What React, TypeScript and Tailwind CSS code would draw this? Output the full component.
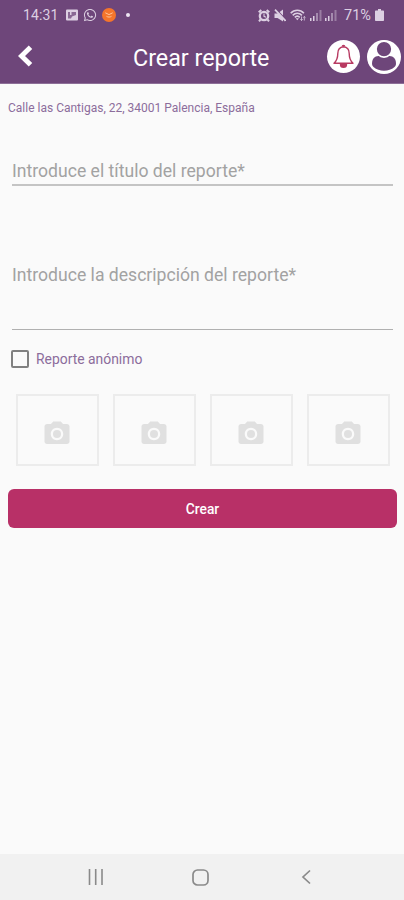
import { FaWhatsapp } from "react-icons/fa";
import { MdPhotoCamera } from "react-icons/md";

const photoSlots = [1, 2, 3, 4];

const SignalIcon = () => (
  <svg width="12" height="12" viewBox="0 0 12 12" fill="currentColor">
    <rect x="0" y="9" width="1.500" height="3" />
    <rect x="3" y="7" width="1.500" height="5" />
    <rect x="6" y="4" width="2" height="8" opacity="0.5" />
    <rect x="9.500" y="1" width="2" height="11" opacity="0.4" />
  </svg>
);

const StatusBar = () => (
  <div className="flex h-[30px] items-center justify-between pl-[23px] pr-[20px] text-[#dccfe2]">
    <div className="flex items-center">
      <span className="w-[43px] text-[14px] leading-none tracking-[0.1px]">14:31</span>
      {/* Imagen */}
      <svg width="12" height="12" viewBox="0 0 12 12">
        <rect x="0" y=".5" width="12" height="11" rx="1" fill="currentColor" />
        <path d="M2 9.500V3h2v3h1.500V3H10v3L6 7.500l-1 2Z" fill="#6e467a" opacity=".75" />
      </svg>
      <FaWhatsapp className="ml-[5px] h-[14px] w-[14px]" />
      <span className="ml-[5px] flex h-[14px] w-[14px] items-center justify-center rounded-full bg-[#f5752b]">
        <svg width="8" height="6" viewBox="0 0 8 6" fill="none" stroke="#ffc49a" strokeWidth="1">
          <path d="M.3.800 4 2.600 7.700.800M1.500 4.300c1.400 1 3.600 1 5 0" />
        </svg>
      </span>
      <span className="ml-[10px] h-1 w-1 rounded-full bg-[#eee5f2]" />
    </div>
    <div className="flex items-center">
      {/* Alarma */}
      <svg width="12" height="13" viewBox="0 0 12 13" fill="none" stroke="currentColor">
        <circle cx="6" cy="7" r="4.200" strokeWidth="2.300" />
        <path d="M6 4.500V7.300l2 1" strokeWidth="1.100" />
        <path d="M.7 3.200 3.300 1M11.300 3.200 8.700 1M2.500 10.500 1 12.300M9.500 10.500l1.500 1.800" strokeWidth="2" />
      </svg>
      {/* Silencio */}
      <svg className="ml-[4px]" width="12" height="13" viewBox="0 0 12 13">
        <path d="M.5 4.500h3L9 .5v12L3.500 9h-3Z" fill="currentColor" />
        <path d="M2.500.700 12 10.500" stroke="#6e467a" strokeWidth="1.200" />
        <path d="M1 .7 11.500 11.800" stroke="currentColor" strokeWidth="1.700" />
      </svg>
      {/* Wifi */}
      <svg className="ml-[4px] mr-[4px]" width="16" height="12" viewBox="0 0 16 12" fill="none" stroke="currentColor">
        <path d="M.7 4.200C4.300.300 10.300.300 13.900 4.200M2.700 6.400c2.600-2.800 6.600-2.800 9.200 0M4.800 8.400c1.500-1.500 3.500-1.500 5 0" strokeWidth="1.600" />
        <path d="M5.600 9.200h3.400l-1.700 2Z" fill="currentColor" stroke="none" />
        <path d="M11.500 7.500v4M10.300 10.200l1.200 1.300 1.200-1.300M14.300 11.500v-4M13.200 8.700l1.100-1.200 1.200 1.200" strokeWidth=".8" />
      </svg>
      <SignalIcon />
      <span className="w-[3px]" />
      <SignalIcon />
      <span className="ml-[7px] w-[31px] pt-px text-[14.500px] leading-[16px]">71%</span>
      <svg width="9" height="12" viewBox="0 0 9 12" fill="currentColor">
        <path d="M3 0h3v1.500h2.200c.5 0 .8.300.8.800v8.900c0 .5-.3.800-.8.800H.8c-.5 0-.8-.3-.8-.8V2.300c0-.5.300-.8.800-.8H3z" />
      </svg>
    </div>
  </div>
);

const Header = () => (
  <header className="h-[84px] border-b border-[#8d6f98] bg-[#6e467a]">
    <StatusBar />
    <div className="flex h-[53px] items-center pl-[18px] pr-[3px] text-white">
      <button className="flex w-[115px] items-center pb-[2px]">
        <svg width="15" height="22" viewBox="0 0 15 22" fill="none" stroke="currentColor" strokeWidth="5">
          <path d="M12.500 2.300 3.500 11l9 8.700" />
        </svg>
      </button>
      <h1 className="flex-1 pt-[2px] text-[23.3px] leading-[24px] whitespace-nowrap">Crear reporte</h1>
      <button className="mr-[7px] flex h-[33px] w-[33px] items-center justify-center rounded-full bg-white">
        <svg width="23" height="25" viewBox="0 0 23 25" fill="none" stroke="#b83a62" strokeWidth="1.400" strokeLinejoin="round">
          <path d="M11.500 2.700C8 3 5.800 5.700 5.800 9.500c0 5-.8 7-3.800 9.800h19c-3-2.800-3.800-4.800-3.800-9.800 0-3.800-2.200-6.500-5.700-6.800Z" />
          <path d="M8.500 20.500a3 2.800 0 0 0 6 0Z" fill="#b83a62" />
          <path d="M10.300 2.600a1.200 1.200 0 0 1 2.400 0" />
        </svg>
      </button>
      <button>
        <svg width="34" height="34" viewBox="0 0 34 34">
          <circle cx="17" cy="17" r="17" fill="#fff" />
          <path d="M5 23.500c0-4.500 2.500-7.500 6.500-7.500h11c4 0 6.500 3 6.500 7.500 0 1.500-.5 2.500-1.500 3.500-3 2.500-6.500 3.700-10.500 3.700S9.500 29.500 6.500 27C5.500 26 5 25 5 23.500Z" fill="#6e467a" />
          <circle cx="17" cy="9.100" r="8" fill="#6e467a" stroke="#fff" strokeWidth="1.700" />
        </svg>
      </button>
    </div>
  </header>
);

const NavBar = () => (
  <nav className="flex h-[46px] items-center bg-[#f1f1f1] pl-[88px] text-[#8a8a8a]">
    <svg width="16" height="16" viewBox="0 0 16 16" fill="none" stroke="currentColor" strokeWidth="1.600">
      <path d="M1.500 0v16M7.700 0v16M14 0v16" />
    </svg>
    <svg className="ml-[88px]" width="17" height="17" viewBox="0 0 17 17" fill="none" stroke="currentColor" strokeWidth="1.700">
      <rect x="1" y="1" width="15" height="15" rx="4.500" />
    </svg>
    <svg className="ml-[92px]" width="10" height="16" viewBox="0 0 10 16" fill="none" stroke="currentColor" strokeWidth="1.700">
      <path d="M9 1.500 2 8l7 6.500" />
    </svg>
  </nav>
);

export default function App() {
  return (
    <div className="flex h-[900px] w-[404px] flex-col bg-[#fafafa] font-['Roboto',sans-serif]">
      <Header />

      <main className="flex flex-1 flex-col px-2">
        <p className="mt-[17px] h-[14px] text-[12px] leading-[14px] whitespace-nowrap text-[#8c6d9c]">
          Calle las Cantigas, 22, 34001 Palencia, España
        </p>

        <input
          type="text"
          placeholder="Introduce el título del reporte*"
          className="mr-[3px] ml-1 mt-[41px] h-[30px] border-b-2 border-[#c4c4c4] bg-transparent pt-[2px] text-[17.6px] outline-none placeholder:text-[#a2a2a2]"
        />
        <textarea
          placeholder="Introduce la descripción del reporte*"
          className="mr-[3px] ml-1 mt-[78px] h-[66px] resize-none border-b border-[#b0b0b0] bg-transparent text-[17.6px] leading-[22px] outline-none placeholder:text-[#a2a2a2]"
        />

        <label className="mt-[19px] ml-[3px] flex h-[19px] items-center gap-[7px] text-[13.900px] text-[#8c6d9c]">
          <input type="checkbox" className="h-[18px] w-[18px] appearance-none rounded-[2px] border-2 border-[#808080]" />
          <span className="pt-px">Reporte anónimo</span>
        </label>

        {/* Fotos */}
        <div className="mt-[26px] flex justify-between pl-2 pr-[6px]">
          {photoSlots.map((slot) => (
            <button key={slot} className="flex h-[72px] w-[83px] items-center justify-center border-2 border-[#ececec] pt-[7px] pr-px">
              <MdPhotoCamera className="h-[30px] w-[30px] text-[#e0e0e0]" />
            </button>
          ))}
        </div>

        <button className="mt-[23px] mr-[-1px] h-[39px] rounded-[6px] bg-[#b83067] pt-px text-[13.800px] font-medium text-white">
          Crear
        </button>
      </main>

      <NavBar />
    </div>
  );
}
